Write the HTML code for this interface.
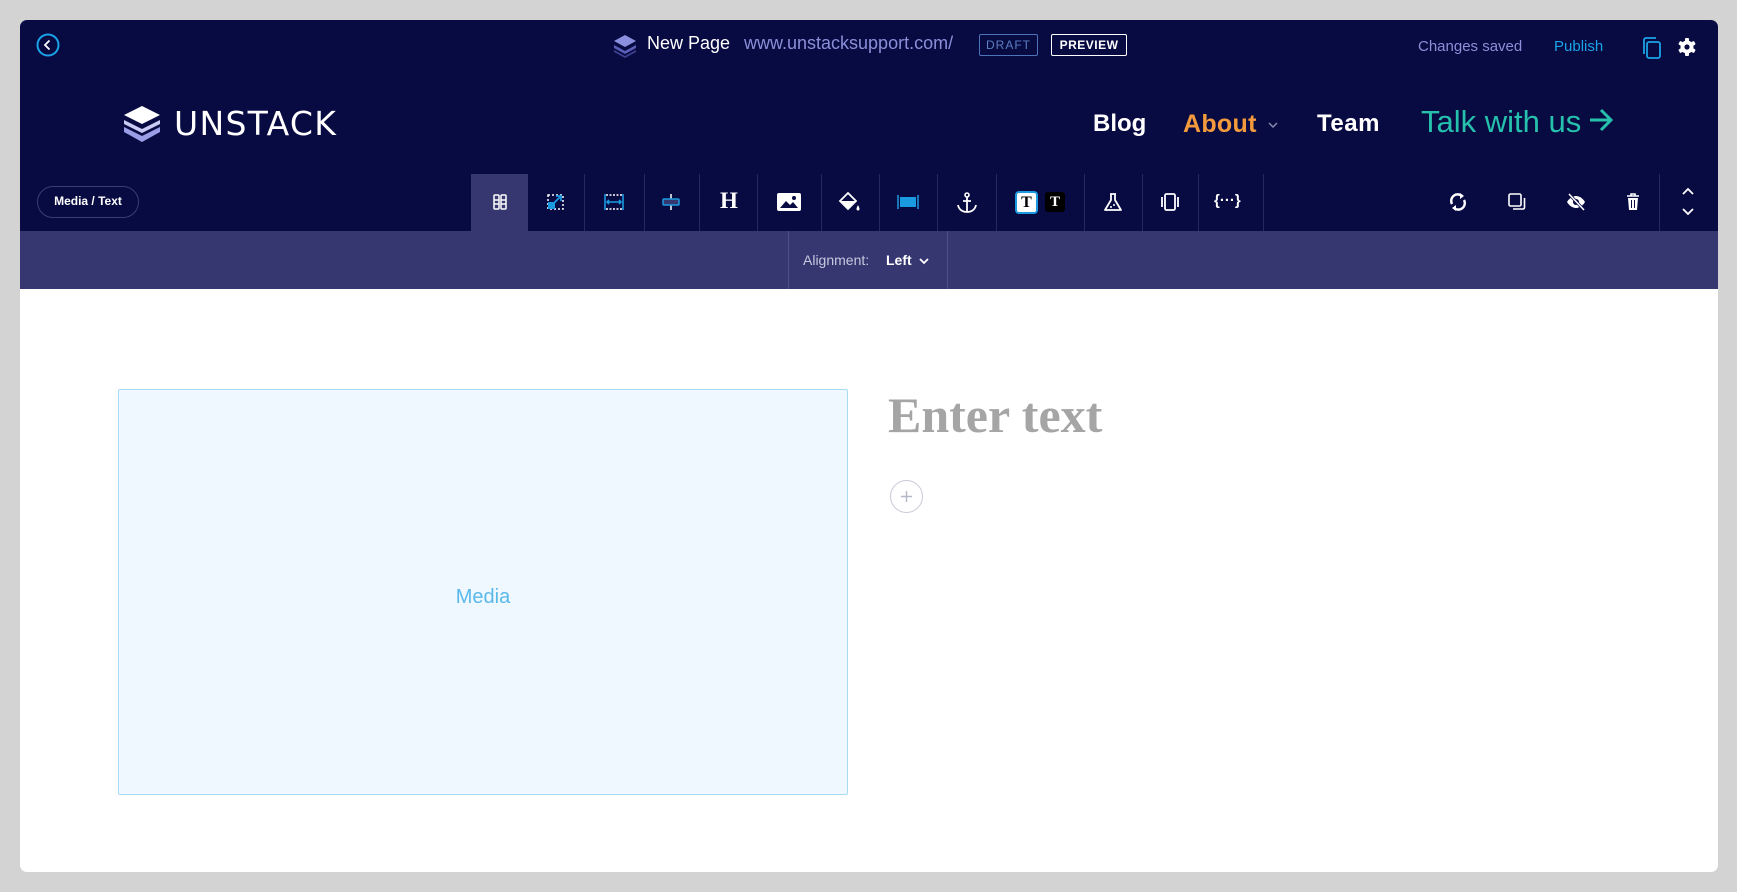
<!DOCTYPE html>
<html><head><meta charset="utf-8"><style>
*{margin:0;padding:0;box-sizing:border-box}
body{width:1737px;height:892px;background:#d3d3d3;position:relative;overflow:hidden;font-family:"Liberation Sans",sans-serif}
.frame{position:absolute;left:20px;top:20px;width:1698px;height:852px;background:#fff;border-radius:7px;overflow:hidden}
.top{position:absolute;left:0;top:0;width:1698px;height:211px;background:#080a42}
.sub{position:absolute;left:0;top:211px;width:1698px;height:58px;background:#363670}
.abs{position:absolute}
.dv{position:absolute;top:154px;width:1px;height:57px;background:#25285e}
.ic{position:absolute;top:171px}
</style></head><body>
<div class="frame">
<div class="top"></div>
<div class="sub"></div>
<svg class="abs" style="left:16px;top:13px" width="24" height="24" viewBox="0 0 24 24"><circle cx="12" cy="12" r="10.5" fill="none" stroke="#1aa3e8" stroke-width="2"/><path d="M13.5 7.5 9 12l4.5 4.5" fill="none" stroke="#fff" stroke-width="1.8"/></svg>
<svg class="abs" style="left:592px;top:14px" width="26" height="24" viewBox="0 0 26 24"><path d="M13 1 24 7 13 13 2 7z" fill="#8b8fe0"/><path d="M2 11l11 6 11-6v3L13 20 2 14z" fill="#5a5fb8"/><path d="M2 16l11 6 11-6v2L13 24 2 18z" fill="#3d418f"/></svg>
<div class="abs" style="left:627px;top:13px;color:#fff;font-size:18px">New Page</div>
<div class="abs" style="left:724px;top:13px;color:#8b8fd8;font-size:18px">www.unstacksupport.com/</div>
<div class="abs" style="left:959px;top:14px;width:59px;height:22px;border:1px solid #4d73b8;border-radius:2px;color:#5b7fc0;font-size:12px;letter-spacing:1px;text-align:center;line-height:20px">DRAFT</div>
<div class="abs" style="left:1031px;top:14px;width:76px;height:22px;border:1px solid #fff;border-radius:2px;color:#fff;font-size:12px;letter-spacing:.5px;text-align:center;line-height:20px;font-weight:bold">PREVIEW</div>
<div class="abs" style="left:1398px;top:18px;color:#8b8fd8;font-size:15px">Changes saved</div>
<div class="abs" style="left:1534px;top:18px;color:#1aa3e8;font-size:15px">Publish</div>
<svg class="abs" style="left:1621px;top:16px" width="22" height="24" viewBox="0 0 22 24"><rect x="6" y="6" width="13" height="16" rx="2" fill="none" stroke="#1aa3e8" stroke-width="1.8"/><path d="M3 18V4a2 2 0 0 1 2-2h10" fill="none" stroke="#1aa3e8" stroke-width="1.8"/></svg>
<svg class="abs" style="left:1657px;top:17px" width="20" height="20" viewBox="0 0 20 20"><g fill="#fff"><circle cx="10" cy="10" r="6.5"/><rect x="8" y="1" width="4" height="18" rx="1"/><rect x="8" y="1" width="4" height="18" rx="1" transform="rotate(60 10 10)"/><rect x="8" y="1" width="4" height="18" rx="1" transform="rotate(120 10 10)"/></g><circle cx="10" cy="10" r="2.6" fill="#080a42"/></svg>
<svg class="abs" style="left:102px;top:86px" width="40" height="36" viewBox="0 0 40 36"><path d="M20 0 38 9 20 18 2 9z" fill="#fff"/><path d="M2 14l18 9 18-9v4L20 27 2 18z" fill="#c9cbf5"/><path d="M2 21l18 9 18-9v5L20 36 2 26z" fill="#9a9ee6"/></svg>
<div class="abs" style="left:154px;top:84px;color:#fff;font-size:33px;letter-spacing:1.3px;font-family:'DejaVu Sans',sans-serif">UNSTACK</div>
<div class="abs" style="left:1073px;top:90px;color:#fff;font-size:24px;font-weight:bold">Blog</div>
<div class="abs" style="left:1163px;top:90px;color:#f39b3c;font-size:25px;font-weight:bold;letter-spacing:.3px">About</div>
<svg class="abs" style="left:1247px;top:100px" width="12" height="10"><path d="M2 3l4 4 4-4" fill="none" stroke="#888aab" stroke-width="1.5"/></svg>
<div class="abs" style="left:1297px;top:90px;color:#fff;font-size:24px;font-weight:bold;letter-spacing:.5px">Team</div>
<div class="abs" style="left:1401px;top:84px;color:#26c1ad;font-size:31px">Talk with us</div>
<svg class="abs" style="left:1568px;top:86px" width="26" height="28" viewBox="0 0 26 28"><path d="M2 14h20M13 4l10 10-10 10" fill="none" stroke="#26c1ad" stroke-width="3"/></svg>
<div class="abs" style="left:17px;top:166px;width:102px;height:32px;border:1.5px solid #3a3d72;border-radius:16px;color:#fff;font-size:12px;font-weight:bold;text-align:center;line-height:29px">Media / Text</div>
<div class="abs" style="left:451px;top:154px;width:57px;height:57px;background:#363670"></div>
<div class="dv" style="left:564px"></div><div class="dv" style="left:624px"></div><div class="dv" style="left:679px"></div><div class="dv" style="left:737px"></div><div class="dv" style="left:801px"></div><div class="dv" style="left:859px"></div><div class="dv" style="left:917px"></div><div class="dv" style="left:976px"></div><div class="dv" style="left:1064px"></div><div class="dv" style="left:1122px"></div><div class="dv" style="left:1178px"></div><div class="dv" style="left:1243px"></div><div class="dv" style="left:1639px"></div>
<div class="abs" style="left:768px;top:211px;width:1px;height:58px;background:#4d5088"></div>
<div class="abs" style="left:927px;top:211px;width:1px;height:58px;background:#4d5088"></div>
<svg class="ic" style="left:469px" width="22" height="22" viewBox="0 0 22 22"><g fill="none" stroke="#fff" stroke-width="1.5"><rect x="5" y="4" width="5" height="14" rx="1"/><rect x="12" y="4" width="5" height="14" rx="1"/><path d="M5 9h5M5 13h5M12 9h5M12 13h5"/></g></svg>
<svg class="ic" style="left:525px" width="22" height="22" viewBox="0 0 22 22"><rect x="3" y="4" width="15" height="14" fill="none" stroke="#fff" stroke-width="1.5" stroke-dasharray="2 2"/><rect x="3" y="11" width="7" height="7" fill="#1a9be0"/><path d="M9 12l7-7M11 5h5v5" fill="none" stroke="#1a9be0" stroke-width="1.8"/></svg>
<svg class="ic" style="left:583px" width="22" height="22" viewBox="0 0 22 22"><path d="M2 3v16M20 3v16M4 11h14M6 9l-2 2 2 2M16 9l2 2-2 2" fill="none" stroke="#1a9be0" stroke-width="1.6"/><path d="M3 4h16M3 18h16" stroke="#fff" stroke-width="1.4" stroke-dasharray="2 1.5"/></svg>
<svg class="ic" style="left:640px" width="22" height="22" viewBox="0 0 22 22"><path d="M11 3v16" stroke="#fff" stroke-width="1.5"/><rect x="3" y="8" width="16" height="6" rx="1" fill="#363670" stroke="#1a9be0" stroke-width="1.5"/></svg>
<div class="abs" style="left:700px;top:168px;color:#fff;font:bold 23px 'Liberation Serif',serif">H</div>
<svg class="ic" style="left:756px" width="26" height="22" viewBox="0 0 26 22"><rect x="1" y="2" width="24" height="18" rx="2" fill="#fff"/><path d="M4 17l6-7 4 4 3-3 5 6z" fill="#080a42"/><circle cx="18" cy="7" r="2" fill="#080a42"/></svg>
<svg class="ic" style="left:818px" width="24" height="22" viewBox="0 0 24 22"><path d="M10 2 18 10 10 18 2 10z" fill="none" stroke="#fff" stroke-width="1.8"/><path d="M2 10h16L10 18z" fill="#fff"/><path d="M20 14c-1 2-1.5 3-1.5 4a1.5 1.5 0 0 0 3 0c0-1-.5-2-1.5-4z" fill="#fff"/></svg>
<svg class="ic" style="left:876px" width="24" height="22" viewBox="0 0 24 22"><path d="M2 4v14M22 4v14" stroke="#1a9be0" stroke-width="1.5"/><rect x="4" y="6" width="16" height="10" fill="#1a9be0"/></svg>
<svg class="ic" style="left:935px" width="24" height="24" viewBox="0 0 24 24"><circle cx="12" cy="4" r="2" fill="none" stroke="#fff" stroke-width="1.6"/><path d="M12 6v15M8 10h8M3 14c1 5 5 7 9 7s8-2 9-7" fill="none" stroke="#fff" stroke-width="1.8"/></svg>
<div class="abs" style="left:995px;top:171px;width:23px;height:23px;border-radius:4px;background:#fff;border:2px solid #1a9be0;color:#000;font:bold 16px 'Liberation Serif',serif;text-align:center;line-height:20px">T</div>
<div class="abs" style="left:1025px;top:172px;width:20px;height:20px;border-radius:3px;background:#000;color:#fff;font:bold 15px 'Liberation Serif',serif;text-align:center;line-height:20px">T</div>
<svg class="ic" style="left:1082px" width="22" height="22" viewBox="0 0 22 22"><path d="M8 3h6M9 3v6L3 19h16L13 9V3" fill="none" stroke="#fff" stroke-width="1.8" stroke-linejoin="round"/><circle cx="12" cy="14" r="1" fill="#fff"/><circle cx="9" cy="16" r="1" fill="#fff"/></svg>
<svg class="ic" style="left:1139px" width="22" height="22" viewBox="0 0 22 22"><rect x="6" y="3" width="10" height="16" rx="1.5" fill="none" stroke="#fff" stroke-width="1.8"/><path d="M3 6v10M19 6v10" stroke="#fff" stroke-width="1.8"/></svg>
<div class="abs" style="left:1194px;top:172px;color:#fff;font-size:15px;font-weight:bold">{···}</div>
<svg class="ic" style="left:1427px" width="22" height="22" viewBox="0 0 22 22"><path d="M5 13a6.5 6.5 0 0 1 10-8M17 9a6.5 6.5 0 0 1-10 8" fill="none" stroke="#fff" stroke-width="2.4"/><path d="M13 2l4 3-4 3zM9 20l-4-3 4-3z" fill="#fff"/></svg>
<svg class="ic" style="left:1486px" width="22" height="22" viewBox="0 0 22 22"><rect x="3" y="3" width="12" height="12" rx="1.5" fill="none" stroke="#fff" stroke-width="1.6"/><path d="M7 18h10a1.5 1.5 0 0 0 1.5-1.5V7" fill="none" stroke="#fff" stroke-width="1.6"/></svg>
<svg class="ic" style="left:1545px" width="22" height="22" viewBox="0 0 22 22"><path d="M2 11c3-5 7-6 9-6s6 1 9 6c-3 5-7 6-9 6s-6-1-9-6z" fill="#fff"/><circle cx="11" cy="11" r="3" fill="#080a42"/><path d="M4 3l15 16" stroke="#080a42" stroke-width="3"/><path d="M4 3l15 16" stroke="#fff" stroke-width="1.5"/></svg>
<svg class="ic" style="left:1603px" width="20" height="22" viewBox="0 0 20 22"><path d="M4 5h12M8 5V3h4v2" fill="none" stroke="#fff" stroke-width="1.6"/><path d="M5 7h10l-1 12H6z" fill="#fff"/><path d="M8.5 9v8M11.5 9v8" stroke="#080a42" stroke-width="1"/></svg>
<svg class="abs" style="left:1660px;top:166px" width="16" height="36" viewBox="0 0 16 36"><path d="M3 8l5-5 5 5M3 23l5 5 5-5" fill="none" stroke="#fff" stroke-width="1.8"/></svg>
<div class="abs" style="left:783px;top:232px;color:#c8c9e0;font-size:14px">Alignment:</div>
<div class="abs" style="left:866px;top:232px;color:#fff;font-size:14px;font-weight:bold">Left</div>
<svg class="abs" style="left:898px;top:235px" width="12" height="12"><path d="M2 4l4 4 4-4" fill="none" stroke="#fff" stroke-width="1.8"/></svg>
<div class="abs" style="left:98px;top:369px;width:730px;height:406px;background:#eef8fe;border:1px solid #a8dcf5;border-radius:2px"></div>
<div class="abs" style="left:98px;top:566px;width:730px;text-align:center;color:#5ab8ea;font-size:20px">Media</div>
<div class="abs" style="left:868px;top:366px;color:#a5a5a5;font:bold 50px 'Liberation Serif',serif">Enter text</div>
<div class="abs" style="left:870px;top:460px;width:33px;height:33px;border:1.5px solid #c8c9d8;border-radius:50%"></div>
<svg class="abs" style="left:880px;top:470px" width="13" height="13"><path d="M6.5 1v11M1 6.5h11" stroke="#b5b7c8" stroke-width="1.4"/></svg>
</div>
</body></html>
